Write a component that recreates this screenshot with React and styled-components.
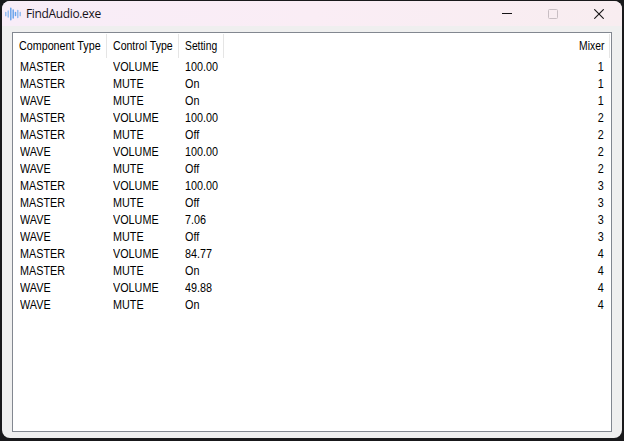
import React from 'react';
import styled, { createGlobalStyle } from 'styled-components';

const Global = createGlobalStyle`
  * { box-sizing: border-box; }
  html, body { margin: 0; background: #19191b; }
`;

const Desktop = styled.div`
  width: 624px;
  height: 441px;
  padding: 1px 2px 3px 2px;
  background: #19191b;
  overflow: hidden;
`;

const Window = styled.main`
  height: 437px;
  display: flex;
  flex-direction: column;
  background: #efefef;
  border-radius: 8px;
  overflow: hidden;
`;

const TitleBar = styled.header`
  height: 25px;
  flex: none;
  display: flex;
  align-items: center;
  padding-left: 3px;
  background: linear-gradient(90deg, #f8edf8, #faedf5 50%, #f8edf0);
`;

const Title = styled.h1`
  margin: 0 auto 0 5px;
  font: 400 12px/16px "Open Sans", "Noto Sans", sans-serif;
  letter-spacing: ${(p) => p.$tracking}px;
  color: #161218;
`;

const CaptionButton = styled.button`
  width: 46px;
  height: 25px;
  padding: 0;
  border: 0;
  background: none;
  display: grid;
  place-items: center;
  color: ${(p) => (p.disabled ? '#c8bec3' : '#151315')};
`;

const ListView = styled.section`
  width: 600px;
  height: 400px;
  margin: 6px 0 0 10px;
  border: 1px solid #828790;
  background: #fff;
  color: #000;
  font: 12px/17px "Liberation Sans", Arial, sans-serif;
`;

const Columns = styled.div`
  display: grid;
  grid-template-columns: 94px 72px 45px 386px;
`;

const HeaderRow = styled(Columns)`
  height: 26px;
  padding-top: 1px;
`;

const HeaderCell = styled.div`
  height: 24px;
  padding: 0 5px 0 6px;
  line-height: 24px;
  border-right: 1px solid #e5e5e5;
  text-align: ${(p) => p.$align || 'left'};
  white-space: nowrap;
`;

const Row = styled(Columns)`
  height: 17px;
`;

const Cell = styled.div`
  padding: 0 6px;
  text-align: ${(p) => p.$align || 'left'};
  white-space: nowrap;

  &:first-child {
    padding-left: 7px;
  }
`;

const Narrow = styled.span`
  display: inline-block;
  transform: scaleX(${(p) => p.$scale || 0.9});
  transform-origin: ${(p) => p.$origin || 'left'} center;
`;

const rows = [
  ['MASTER', 'VOLUME', '100.00', 1],
  ['MASTER', 'MUTE', 'On', 1],
  ['WAVE', 'MUTE', 'On', 1],
  ['MASTER', 'VOLUME', '100.00', 2],
  ['MASTER', 'MUTE', 'Off', 2],
  ['WAVE', 'VOLUME', '100.00', 2],
  ['WAVE', 'MUTE', 'Off', 2],
  ['MASTER', 'VOLUME', '100.00', 3],
  ['MASTER', 'MUTE', 'Off', 3],
  ['WAVE', 'VOLUME', '7.06', 3],
  ['WAVE', 'MUTE', 'Off', 3],
  ['MASTER', 'VOLUME', '84.77', 4],
  ['MASTER', 'MUTE', 'On', 4],
  ['WAVE', 'VOLUME', '49.88', 4],
  ['WAVE', 'MUTE', 'On', 4],
];

const WaveIcon = () => (
  <svg width="16" height="14" viewBox="0 0 16 14" fill="none" strokeLinecap="round">
    <path stroke="#86b5f0" strokeWidth="1.3" d="M.8 5.3v3.4M3.2 4v6M12.8 3.5v7M15.2 5.3v3.4" />
    <path stroke="#6aa5ec" strokeWidth="1.5" d="M5.8 1.2v11.6M8.2 3v8M10.5 5.5v3" />
  </svg>
);

export default function App() {
  return (
    <>
      <Global />
      <Desktop>
        <Window>
          <TitleBar>
            <WaveIcon />
            <Title $tracking={-0.35}>FindAudio.exe</Title>
            <CaptionButton aria-label="Minimize">
              <svg width="10" height="10"><path d="M0 4.5h10" stroke="currentColor" /></svg>
            </CaptionButton>
            <CaptionButton aria-label="Maximize" disabled>
              <svg width="10" height="10"><rect x=".5" y=".5" width="9" height="9" rx="1" fill="none" stroke="currentColor" /></svg>
            </CaptionButton>
            <CaptionButton aria-label="Close">
              <svg width="10" height="10"><path d="M.3.3l9.4 9.4M9.7.3L.3 9.7" stroke="currentColor" strokeWidth="1.1" /></svg>
            </CaptionButton>
          </TitleBar>
          <ListView>
            <HeaderRow>
              <HeaderCell><Narrow $scale={0.895}>Component Type</Narrow></HeaderCell>
              <HeaderCell><Narrow $scale={0.88}>Control Type</Narrow></HeaderCell>
              <HeaderCell><Narrow $scale={0.86}>Setting</Narrow></HeaderCell>
              <HeaderCell $align="right"><Narrow $scale={0.86} $origin="right">Mixer</Narrow></HeaderCell>
            </HeaderRow>
            {rows.map(([component, control, setting, mixer], i) => (
              <Row key={i}>
                <Cell><Narrow>{component}</Narrow></Cell>
                <Cell><Narrow>{control}</Narrow></Cell>
                <Cell><Narrow>{setting}</Narrow></Cell>
                <Cell $align="right"><Narrow $origin="right">{mixer}</Narrow></Cell>
              </Row>
            ))}
          </ListView>
        </Window>
      </Desktop>
    </>
  );
}
